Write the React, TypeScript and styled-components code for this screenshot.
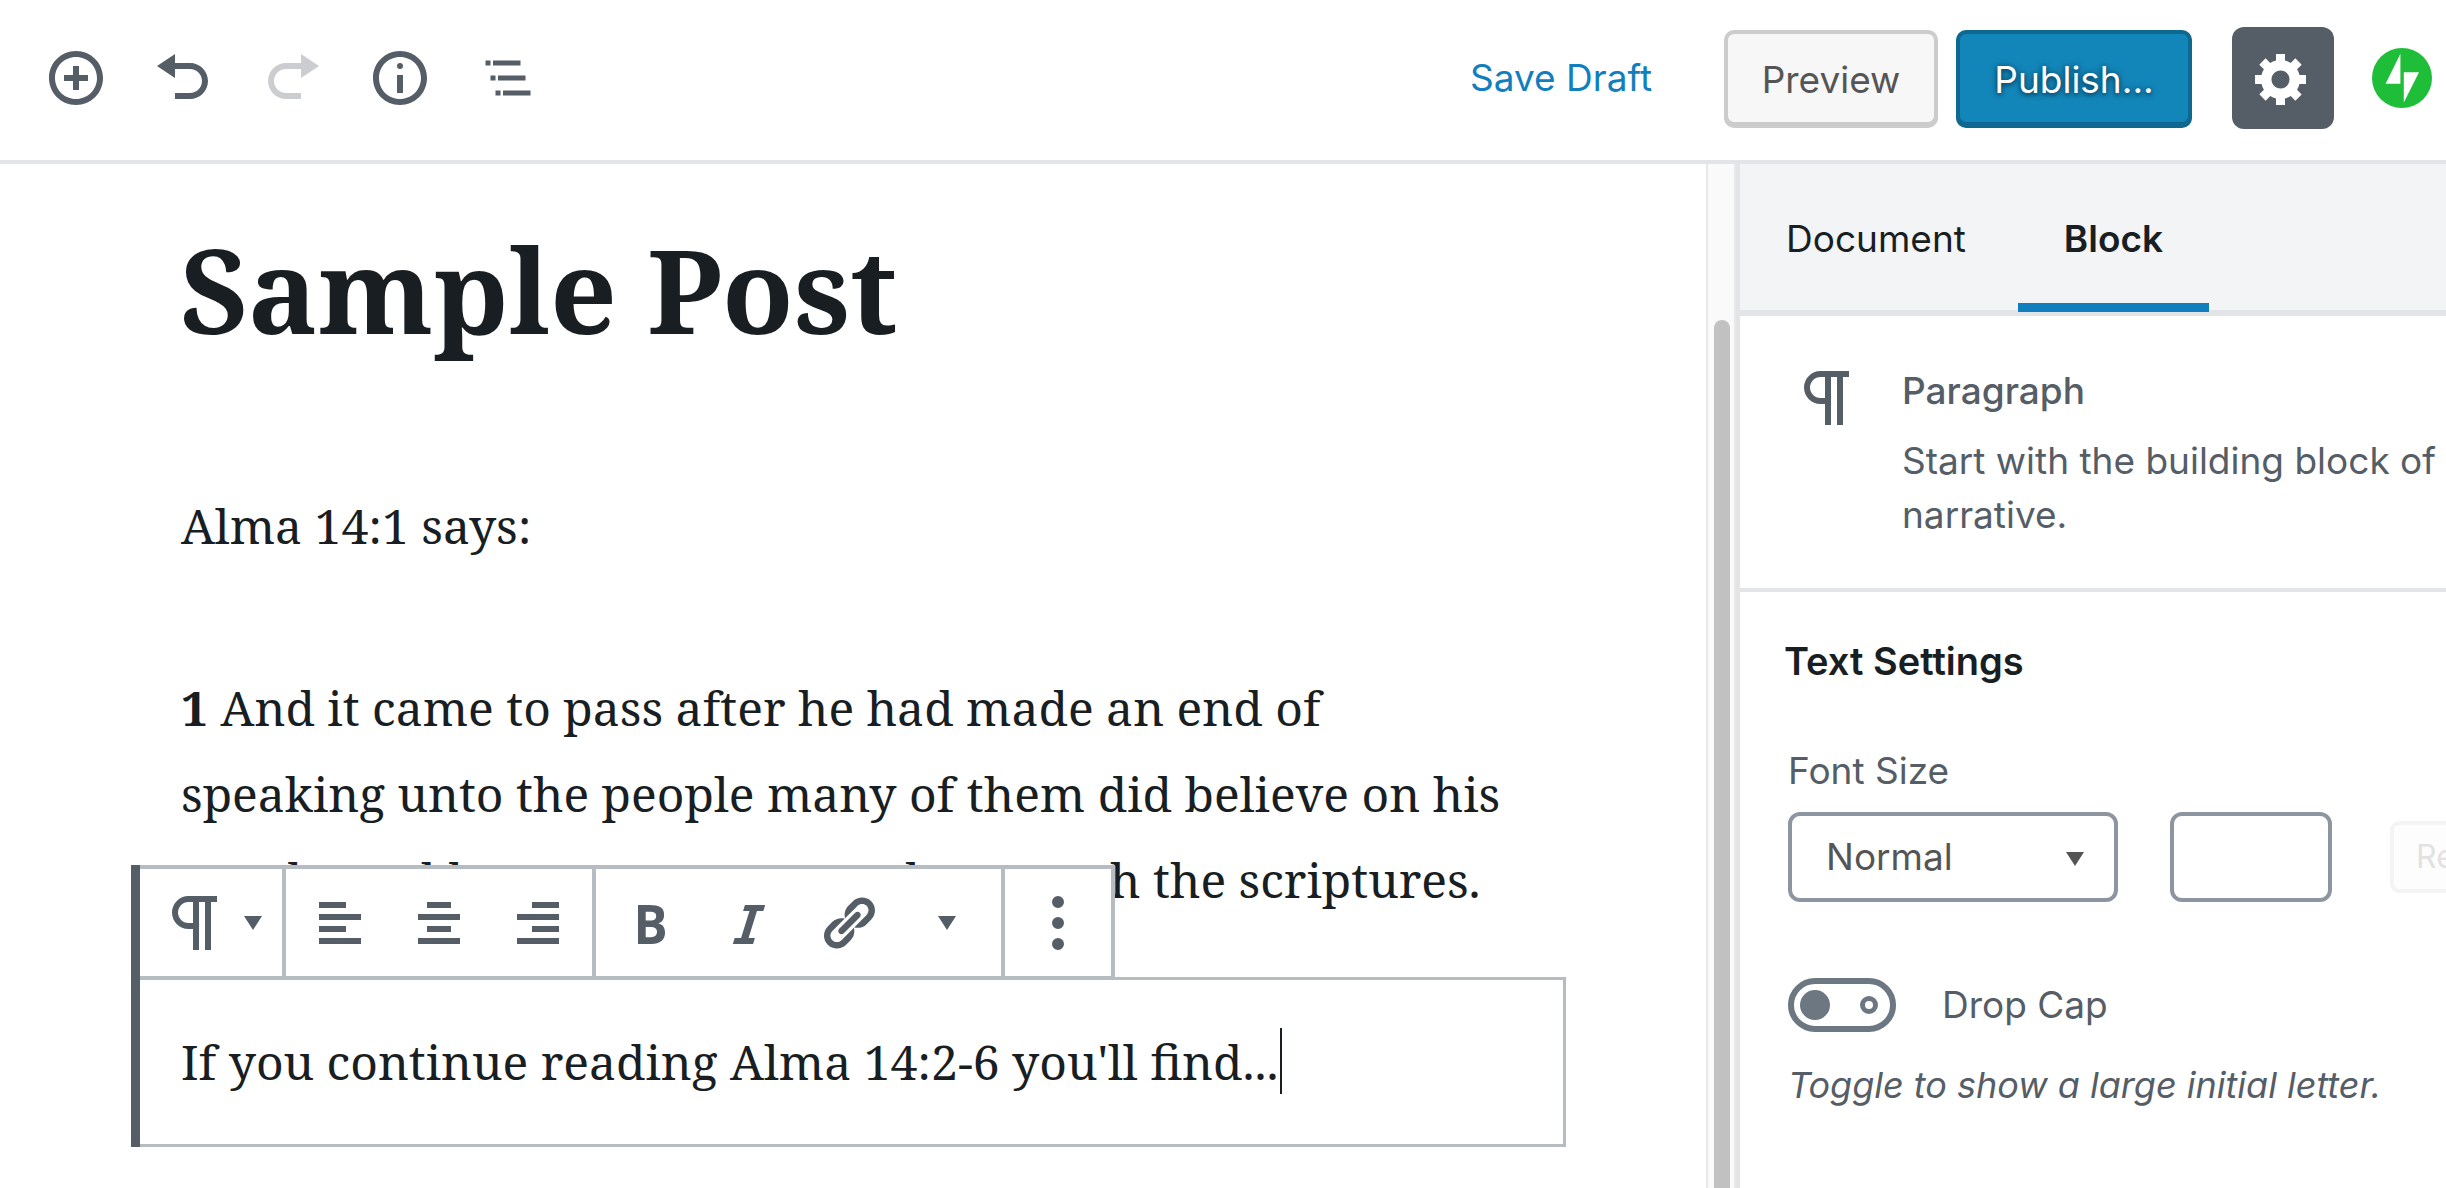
import React from 'react';
import styled, { createGlobalStyle } from 'styled-components';

const sans = `Inter, "Liberation Sans", sans-serif`;
const serif = `"Noto Serif", "Liberation Serif", serif`;

const color = {
  ink: '#191e23',
  slate: '#555d66',
  line: '#e2e4e7',
  outline: '#b5bcc2',
  blue: '#117ebd',
};

const GlobalStyle = createGlobalStyle`
  *, *::before, *::after { box-sizing: border-box; }
  body { margin: 0; background: #fff; color: ${color.ink}; font-family: ${sans}; font-size: 37px; }
  button, input, select { font: inherit; color: inherit; margin: 0; }
  h1, h2, p { margin: 0; }
`;

const Page = styled.div`
  display: flex;
  flex-direction: column;
  height: 100vh;
  overflow: hidden;
`;

const Header = styled.header`
  flex: none;
  display: flex;
  align-items: center;
  justify-content: space-between;
  height: 164px;
  padding: 0 14px 4px 22px;
  border-bottom: 4px solid ${color.line};
`;

const Tools = styled.div`
  display: flex;
`;

const IconButton = styled.button`
  display: flex;
  align-items: center;
  justify-content: center;
  width: 108px;
  height: 108px;
  padding: 0;
  border: 0;
  background: none;
  color: ${color.slate};
  &:disabled { opacity: 0.3; }
`;

const Actions = styled.div`
  display: flex;
  align-items: center;
`;

const SaveLink = styled.a`
  margin-right: 72px;
  color: ${color.blue};
  line-height: 54px;
  text-decoration: none;
`;

const ActionButton = styled.button<{ $primary?: boolean }>`
  height: 96px;
  width: ${(p) => (p.$primary ? 236 : 214)}px;
  margin-right: ${(p) => (p.$primary ? 40 : 18)}px;
  padding: 2px 0 0;
  border: 4px solid ${(p) => (p.$primary ? '#0e6890' : '#ccc')};
  border-radius: 10px;
  background: ${(p) => (p.$primary ? '#1386b9' : '#f7f7f7')};
  color: ${(p) => (p.$primary ? '#fff' : '#555')};
  box-shadow: 0 2px 0 ${(p) => (p.$primary ? '#0e6890' : '#ccc')};
  text-shadow: ${(p) => (p.$primary ? '0 0 6px #0a4b6b, 0 2px 4px #0a4b6b' : 'none')};
`;

const SettingsButton = styled.button`
  display: flex;
  align-items: center;
  justify-content: center;
  width: 102px;
  height: 102px;
  margin-right: 38px;
  padding: 0 2px 0 0;
  border: 0;
  border-radius: 12px;
  background: ${color.slate};
  color: #fff;
`;

const JetpackButton = styled.button`
  display: flex;
  padding: 0;
  border: 0;
  background: none;
`;

const Body = styled.div`
  flex: 1;
  display: flex;
  min-height: 0;
`;

const Editor = styled.main`
  flex: 1;
  min-width: 0;
  padding: 45px 140px 0;
  overflow: hidden;
  font-family: ${serif};
  font-size: 48px;
  line-height: 86px;
`;

const Title = styled.h1`
  padding: 0 40px 18px;
  font-size: 117px;
  line-height: 160px;
  font-weight: 700;
`;

const Paragraph = styled.p`
  margin-top: 96px;
  padding: 0 41px;
`;

const Verse = styled.strong`
  font-weight: 700;
`;

const SelectedBlock = styled.section`
  position: relative;
  margin-top: 54px;
  padding: 39px 41px;
  border: 3px solid ${color.outline};
  border-left: 0;
  box-shadow: -9px 0 0 ${color.slate};
`;

const Caret = styled.span`
  display: inline-block;
  width: 2px;
  height: 66px;
  margin-left: 2px;
  vertical-align: -14px;
  background: ${color.ink};
`;

/* Floats over the paragraph above the selected block. */
const BlockToolbar = styled.div`
  position: absolute;
  left: 0;
  bottom: 100%;
  display: flex;
  height: 115px;
  border: 4px solid ${color.outline};
  border-left: 0;
  background: #fff;
  box-shadow: -9px 0 0 ${color.slate};
`;

const ToolbarGroup = styled.div`
  display: flex;
  padding: 0 4px 0 5px;
  & + & { border-left: 4px solid ${color.outline}; }
`;

const ToolbarButton = styled.button<{ $width?: number }>`
  display: flex;
  align-items: center;
  justify-content: center;
  gap: 12px;
  width: ${(p) => p.$width ?? 99}px;
  padding: 0 2px 0 0;
  border: 0;
  background: none;
  color: ${color.slate};
`;

const ScrollTrack = styled.div`
  flex: none;
  width: 30px;
  padding: 156px 4px 0 6px;
  border: solid #e8e8e8;
  border-width: 0 2px;
  background: #fafafa;
`;

const ScrollThumb = styled.div`
  width: 16px;
  height: 100%;
  border-radius: 8px 8px 0 0;
  background: #c1c1c1;
`;

const Sidebar = styled.aside`
  flex: none;
  width: 710px;
  border-left: 4px solid ${color.line};
  overflow: hidden;
  color: ${color.slate};
`;

const Tabs = styled.div`
  display: flex;
  gap: 6px;
  height: 152px;
  border-bottom: 6px solid ${color.line};
  background: #f3f4f5;
`;

const Tab = styled.button<{ $active?: boolean }>`
  height: 148px;
  padding: 0 46px;
  border: 0;
  background: none;
  color: ${color.ink};
  font-weight: ${(p) => (p.$active ? 600 : 400)};
  box-shadow: ${(p) => (p.$active ? `inset 0 -9px 0 ${color.blue}` : 'none')};
`;

const Card = styled.section`
  display: flex;
  gap: 38px;
  padding: 46px 0 46px 52px;
  border-bottom: 4px solid ${color.line};
  line-height: 54px;
`;

const CardTitle = styled.h2`
  margin: 2px 0 16px;
  font-size: 37px;
  font-weight: 500;
`;

const CardText = styled.p`
  font-size: 37px;
`;

const PanelTitle = styled.h2`
  padding: 42px 44px 56px;
  color: ${color.ink};
  font-size: 38px;
  line-height: 54px;
  font-weight: 600;
`;

const PanelBody = styled.section`
  padding-left: 48px;
  line-height: 54px;
`;

const FieldLabel = styled.label`
  display: block;
  margin-bottom: 14px;
`;

const FieldRow = styled.div`
  display: flex;
  align-items: center;
  margin-bottom: 76px;
`;

const SelectWrap = styled.div`
  position: relative;
  flex: none;
  width: 330px;
  margin-right: 52px;
  color: #555;
  svg {
    position: absolute;
    right: 34px;
    top: 40px;
    pointer-events: none;
  }
`;

const Select = styled.select`
  display: block;
  appearance: none;
  width: 100%;
  height: 90px;
  padding: 0 34px;
  border: 4px solid #8d96a0;
  border-radius: 12px;
  background: #fff;
`;

const SizeInput = styled.input`
  flex: none;
  width: 162px;
  height: 90px;
  margin-right: 58px;
  padding: 0 20px;
  border: 4px solid #8d96a0;
  border-radius: 12px;
  background: #fff;
`;

const ResetButton = styled.button`
  flex: none;
  height: 72px;
  padding: 0 22px;
  border: 4px solid #f4f4f4;
  border-radius: 9px;
  background: #fdfdfd;
  color: #555;
  font-size: 32px;
  &:disabled { color: #e2e2e2; }
`;

const ToggleRow = styled.label`
  display: flex;
  align-items: center;
  gap: 46px;
  margin-bottom: 26px;
`;

const Toggle = styled.input`
  appearance: none;
  display: flex;
  align-items: center;
  justify-content: space-between;
  width: 108px;
  height: 54px;
  margin: 0;
  padding: 0 12px 0 6px;
  border: 6px solid #6c7781;
  border-radius: 27px;
  &::before {
    content: '';
    width: 30px;
    height: 30px;
    border-radius: 50%;
    background: #6c7781;
  }
  &::after {
    content: '';
    width: 18px;
    height: 18px;
    border: 5px solid #6c7781;
    border-radius: 50%;
  }
`;

const Help = styled.p`
  font-size: 36px;
  font-style: italic;
`;

const PilcrowIcon = styled.svg`
  flex: none;
  width: 72px;
  height: 72px;
`;

const Dashicon = ({ d }: { d: string }) => (
  <svg width="60" height="60" viewBox="0 0 20 20" fill="currentColor" aria-hidden="true">
    <path fillRule="evenodd" d={d} />
  </svg>
);

const Pilcrow = () => (
  <PilcrowIcon viewBox="0 0 24 24" fill="currentColor" aria-hidden="true">
    <path d="M11 5v7H9.5C7.6 12 6 10.4 6 8.5S7.6 5 9.5 5H11m8-2H9.5C6.5 3 4 5.5 4 8.5S6.5 14 9.5 14H11v7h2V5h2v16h2V5h2V3z" />
  </PilcrowIcon>
);

const Outline = () => (
  <svg width="60" height="60" viewBox="0 0 24 24" fill="currentColor" aria-hidden="true">
    <path d="M3 5h2v2H3zM6 5h11v2H6zM5 11h2v2H5zM8 11h11v2H8zM7 17h2v2H7zM10 17h11v2H10z" />
  </svg>
);

const Arrow = () => (
  <svg width="18" height="14" viewBox="0 0 18 14" fill="currentColor" aria-hidden="true">
    <path d="M0 0h18L9 14z" />
  </svg>
);

const Jetpack = () => (
  <svg width="60" height="60" viewBox="0 0 60 60" aria-hidden="true">
    <circle cx="30" cy="30" r="30" fill="#1fbe38" />
    <path fill="#fff" d="M28.4 5.7v30H13.6zM31.8 24.2h15.2L31.8 54.4z" />
  </svg>
);

const icons = {
  add: 'M10 1c-5 0-9 4-9 9s4 9 9 9 9-4 9-9-4-9-9-9zm0 16c-3.9 0-7-3.1-7-7s3.1-7 7-7 7 3.1 7 7-3.1 7-7 7zM11 6H9v3H6v2h3v3h2v-3h3V9h-3V6z',
  undo: 'M12 5H7V2L1 6l6 4V7h5c2.2 0 4 1.8 4 4s-1.8 4-4 4H7v2h5c3.3 0 6-2.7 6-6s-2.7-6-6-6z',
  redo: 'M8 5h5V2l6 4-6 4V7H8c-2.2 0-4 1.8-4 4s1.8 4 4 4h5v2H8c-3.3 0-6-2.7-6-6s2.7-6 6-6z',
  info: 'M10 1c-5 0-9 4-9 9s4 9 9 9 9-4 9-9-4-9-9-9zm0 16c-3.9 0-7-3.1-7-7s3.1-7 7-7 7 3.1 7 7-3.1 7-7 7zM9 9h2v6H9zM10 5a1 1 0 1 0 0 2 1 1 0 0 0 0-2z',
  gear: 'M18 12h-2.18c-.17.7-.44 1.35-.81 1.93l1.54 1.54-2.1 2.1-1.54-1.54c-.58.36-1.23.63-1.91.79V19H8v-2.18c-.68-.16-1.33-.43-1.91-.79l-1.54 1.54-2.12-2.12 1.54-1.54c-.36-.58-.63-1.23-.79-1.91H1V9.03h2.17c.16-.7.44-1.35.8-1.94L2.43 5.55l2.1-2.1 1.54 1.54c.58-.37 1.24-.64 1.93-.81V2h3v2.18c.68.16 1.33.43 1.91.79l1.54-1.54 2.12 2.12-1.54 1.54c.36.59.64 1.24.8 1.94H18V12zm-8.5 1.5c1.66 0 3-1.34 3-3s-1.34-3-3-3-3 1.34-3 3 1.34 3 3 3z',
  left: 'M12 5V3H3v2h9zm5 4V7H3v2h14zm-5 4v-2H3v2h9zm5 4v-2H3v2h14z',
  center: 'M14 5V3H6v2h8zm3 4V7H3v2h14zm-3 4v-2H6v2h8zm3 4v-2H3v2h14z',
  right: 'M17 5V3H8v2h9zm0 4V7H3v2h14zm0 4v-2H8v2h9zm0 4v-2H3v2h14z',
  bold: 'M6 4v13h4.54c1.37 0 2.46-.33 3.26-1 .8-.66 1.2-1.58 1.2-2.77 0-.84-.17-1.51-.51-2.01s-.9-.85-1.67-1.03v-.09c.57-.1 1.02-.4 1.36-.9s.51-1.13.51-1.91c0-1.14-.39-1.98-1.17-2.5C12.75 4.26 11.5 4 9.78 4H6zm2.57 5.15V6.26h1.36c.73 0 1.27.11 1.61.32.34.22.51.58.51 1.07 0 .54-.16.92-.47 1.15s-.82.35-1.51.35h-1.5zm0 2.19h1.6c1.44 0 2.16.53 2.16 1.61 0 .6-.17 1.05-.51 1.34s-.86.43-1.57.43H8.57v-3.38z',
  italic: 'M14.78 6h-2.13l-2.8 9h2.12l-.62 2H4.6l.62-2h2.14l2.8-9H8.03l.62-2h6.75z',
  link: 'M17.74 2.76c1.68 1.69 1.68 4.41 0 6.1l-1.53 1.52c-1.12 1.12-2.7 1.47-4.14 1.09l2.62-2.61.76-.77.76-.76c.84-.84.84-2.2 0-3.04-.84-.85-2.2-.85-3.04 0l-.77.76-3.38 3.38c-.37-1.44-.02-3.02 1.1-4.14l1.52-1.53c1.69-1.68 4.42-1.68 6.1 0zM8.59 13.43l5.34-5.34c.42-.42.42-1.1 0-1.52-.44-.43-1.13-.39-1.53 0l-5.33 5.34c-.42.42-.42 1.1 0 1.52.44.43 1.13.39 1.52 0zm-.76 2.29l4.14-4.15c.38 1.44.03 3.02-1.09 4.14l-1.52 1.53c-1.69 1.68-4.41 1.68-6.1 0-1.68-1.68-1.68-4.42 0-6.1l1.53-1.52c1.12-1.12 2.7-1.47 4.14-1.1l-4.14 4.15c-.85.84-.85 2.2 0 3.05.84.84 2.2.84 3.04 0z',
  more: 'M10 1a2 2 0 1 0 0 4 2 2 0 0 0 0-4zM10 8a2 2 0 1 0 0 4 2 2 0 0 0 0-4zM10 15a2 2 0 1 0 0 4 2 2 0 0 0 0-4z',
};

export default function App() {
  return (
    <>
      <GlobalStyle />
      <Page>
        <Header>
          <Tools>
            <IconButton aria-label="Add block"><Dashicon d={icons.add} /></IconButton>
            <IconButton aria-label="Undo"><Dashicon d={icons.undo} /></IconButton>
            <IconButton aria-label="Redo" disabled><Dashicon d={icons.redo} /></IconButton>
            <IconButton aria-label="Content structure"><Dashicon d={icons.info} /></IconButton>
            <IconButton aria-label="Block navigation"><Outline /></IconButton>
          </Tools>
          <Actions>
            <SaveLink href="#save">Save Draft</SaveLink>
            <ActionButton>Preview</ActionButton>
            <ActionButton $primary>Publish...</ActionButton>
            <SettingsButton aria-label="Settings"><Dashicon d={icons.gear} /></SettingsButton>
            <JetpackButton aria-label="Jetpack"><Jetpack /></JetpackButton>
          </Actions>
        </Header>
        <Body>
          <Editor>
            <Title>Sample Post</Title>
            <Paragraph>Alma 14:1 says:</Paragraph>
            <Paragraph>
              <Verse>1</Verse> And it came to pass after he had made an end of speaking unto the people
              many of them did believe on his words, and began to repent, and to search the scriptures.
            </Paragraph>
            <SelectedBlock>
              <BlockToolbar role="toolbar" aria-label="Block tools">
                <ToolbarGroup>
                  <ToolbarButton $width={133} aria-label="Change block type">
                    <Pilcrow />
                    <Arrow />
                  </ToolbarButton>
                </ToolbarGroup>
                <ToolbarGroup>
                  <ToolbarButton aria-label="Align left"><Dashicon d={icons.left} /></ToolbarButton>
                  <ToolbarButton aria-label="Align center"><Dashicon d={icons.center} /></ToolbarButton>
                  <ToolbarButton aria-label="Align right"><Dashicon d={icons.right} /></ToolbarButton>
                </ToolbarGroup>
                <ToolbarGroup>
                  <ToolbarButton aria-label="Bold"><Dashicon d={icons.bold} /></ToolbarButton>
                  <ToolbarButton aria-label="Italic"><Dashicon d={icons.italic} /></ToolbarButton>
                  <ToolbarButton aria-label="Link"><Dashicon d={icons.link} /></ToolbarButton>
                  <ToolbarButton aria-label="More formatting"><Arrow /></ToolbarButton>
                </ToolbarGroup>
                <ToolbarGroup>
                  <ToolbarButton $width={97} aria-label="More options"><Dashicon d={icons.more} /></ToolbarButton>
                </ToolbarGroup>
              </BlockToolbar>
              <p>If you continue reading Alma 14:2-6 you'll find...<Caret /></p>
            </SelectedBlock>
          </Editor>
          <ScrollTrack><ScrollThumb /></ScrollTrack>
          <Sidebar>
            <Tabs role="tablist">
              <Tab role="tab">Document</Tab>
              <Tab role="tab" aria-selected $active>Block</Tab>
            </Tabs>
            <Card>
              <Pilcrow />
              <div>
                <CardTitle>Paragraph</CardTitle>
                <CardText>Start with the building block of narrative.</CardText>
              </div>
            </Card>
            <PanelTitle>Text Settings</PanelTitle>
            <PanelBody>
              <FieldLabel htmlFor="font-size">Font Size</FieldLabel>
              <FieldRow>
                <SelectWrap>
                  <Select id="font-size" defaultValue="Normal">
                    <option>Normal</option>
                  </Select>
                  <Arrow />
                </SelectWrap>
                <SizeInput type="text" aria-label="Custom font size" />
                <ResetButton disabled>Reset</ResetButton>
              </FieldRow>
              <ToggleRow>
                <Toggle type="checkbox" role="switch" />
                Drop Cap
              </ToggleRow>
              <Help>Toggle to show a large initial letter.</Help>
            </PanelBody>
          </Sidebar>
        </Body>
      </Page>
    </>
  );
}
